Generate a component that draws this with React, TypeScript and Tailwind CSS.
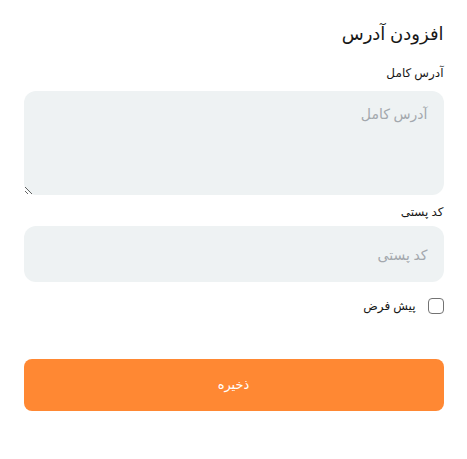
export default function App() {
  return (
    <main
      dir="rtl"
      className="min-h-screen bg-white"
      style={{ fontFamily: '"Noto Sans", "DejaVu Sans", sans-serif' }}
    >
      <section className="mx-auto w-[420px] pt-[19px]">
        <h2 className="text-[18px] leading-7 text-neutral-900">افزودن آدرس</h2>

        <form className="mt-4 flex flex-col">
          <label className="text-[12px] leading-5 text-neutral-900">آدرس کامل</label>
          <textarea
            placeholder="آدرس کامل"
            className="mt-2 h-[104px] w-full rounded-xl bg-[#eef2f3] px-4 py-3 text-[14px] text-neutral-800 placeholder:text-[#a3a8ad] outline-none"
          />

          <label className="mt-[7px] text-[12px] leading-5 text-neutral-900">کد پستی</label>
          <input
            type="text"
            placeholder="کد پستی"
            className="mt-1 h-14 w-full rounded-xl bg-[#eef2f3] px-4 text-[14px] text-neutral-800 placeholder:text-[#a3a8ad] outline-none"
          />

          <label className="mt-[15px] flex items-center gap-3 text-[12px] text-neutral-900">
            <input
              type="checkbox"
              className="h-4 w-4 appearance-none rounded border border-neutral-500 bg-white"
            />
            پیش فرض
          </label>

          <button
            type="button"
            className="mt-11 h-[52px] w-full rounded-lg bg-[#ff8833] text-[13px] text-white"
          >
            ذخیره
          </button>
        </form>
      </section>
    </main>
  );
}
